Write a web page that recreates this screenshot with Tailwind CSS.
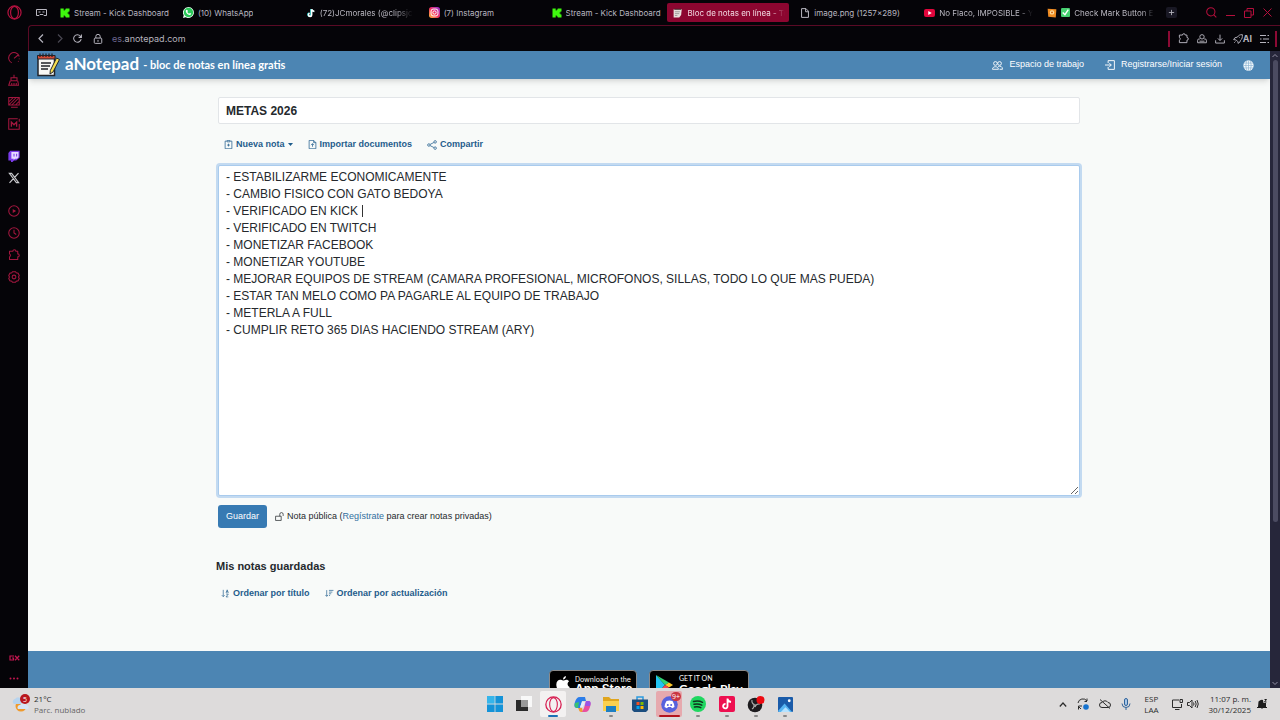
<!DOCTYPE html>
<html lang="es">
<head>
    <meta charset="UTF-8">
    <meta name="viewport" content="width=device-width, initial-scale=1.0">
    <title>Bloc de notas en línea</title>
    <script src="https://cdn.jsdelivr.net/npm/@tailwindcss/browser@4"></script>
</head>
<body class="h-screen flex flex-col overflow-hidden bg-[#050408] font-['Liberation_Sans',Arial,sans-serif]">

    <!-- Shared icons -->
    <svg class="hidden">
        <symbol id="kick" viewBox="0 0 10 10"><path fill="#3ff80e" d="M.5.5h3.200v2h1v-1h1v-1h3.800v3h-1v1h-1v1h1v1h1v3H5.700v-1h-1v-1h-1v2H.5z"/></symbol>
        <symbol id="puzzle" viewBox="0 0 16 16"><path fill="none" stroke="currentColor" stroke-width="1.400" stroke-linejoin="round" d="M2 3h4.500a2 2 0 0 1 4 0H13v3.500a2 2 0 0 1 0 4V14H2v-3.500a2.200 2.200 0 0 0 0-4z"/></symbol>
    </svg>

    <div class="flex flex-1 min-h-0">

        <!-- Browser sidebar -->
        <aside class="w-7 shrink-0 flex flex-col items-center text-[#a3173f]">
            <button aria-label="Menú" class="h-[25px] flex items-center text-[#b3123f]">
                <svg class="size-[15px]" viewBox="0 0 16 16" fill="none" stroke="currentColor" stroke-width="1.300"><circle cx="8" cy="8" r="7"/><ellipse cx="8" cy="8" rx="4.200" ry="6.500"/></svg>
            </button>
            <div class="flex flex-col gap-[10px] pt-[27px]">
                <button aria-label="GX Control"><svg class="size-3 block" viewBox="0 0 16 16" fill="none" stroke="currentColor" stroke-width="1.400"><path d="M5 14.500A7.200 7.200 0 1 1 15 6M8 8.500l5.500-4.500M15 8.500v1M14 12l-.5.8"/></svg></button>
                <button aria-label="Limpiador"><svg class="size-3 block" viewBox="0 0 16 16" fill="none" stroke="currentColor" stroke-width="1.400"><path d="M8 1v4M4 5h8v4H4zM3 9l-2 6h13l-1-6M5 15v-3M8 15v-3M11 15v-3"/></svg></button>
                <button aria-label="Fondos"><svg class="size-3 block" viewBox="0 0 16 16" fill="none" stroke="currentColor" stroke-width="1.400"><path d="M1 2h14v10H1zM4 15h9M1 8l6-6M1 12L11 2M5 12l9-9M10 12l5-5"/></svg></button>
                <button aria-label="Mods"><svg class="size-3 block" viewBox="0 0 16 16" fill="none" stroke="currentColor" stroke-width="1.400"><path d="M13 1H1v14h14V8M15 1v4"/><path stroke-width="1.800" d="M4.500 11.500v-6L8 9l3.500-3.500v6"/></svg></button>
            </div>
            <div class="flex flex-col gap-[10px] pt-5">
                <button aria-label="Twitch"><svg class="size-3 block" viewBox="0 0 16 16"><path fill="#7b3bea" d="M3 1h12.500v9L11 14H8l-2 2H4v-2H.5V4z"/><path fill="#e6dcff" d="M4.500 2.500H14v7l-2 2H9.500l-2 1.800v-1.800h-3z"/><path stroke="#7b3bea" stroke-width="1.400" d="M8 5v3.500M11.500 5v3.500"/></svg></button>
                <button aria-label="X"><svg class="size-3 block" viewBox="0 0 16 16" fill="none" stroke="#c8c8cc"><path stroke-width="1.500" d="M1.800 1.800h3l9.400 12.400h-3zM14 1.500L9 7M7 9l-5 5.500"/></svg></button>
            </div>
            <div class="flex flex-col gap-[10px] pt-[21px]">
                <button aria-label="Reproductor"><svg class="size-3 block" viewBox="0 0 16 16" fill="none" stroke="currentColor" stroke-width="1.400"><circle cx="8" cy="8" r="7"/><path fill="currentColor" d="M7 6.500l2.500 1.500L7 9.500z"/></svg></button>
                <button aria-label="Historial"><svg class="size-3 block" viewBox="0 0 16 16" fill="none" stroke="currentColor" stroke-width="1.400"><circle cx="8" cy="8" r="7"/><path d="M8 3.500V8l3 2"/></svg></button>
                <button aria-label="Extensiones"><svg class="size-3 block"><use href="#puzzle"/></svg></button>
                <button aria-label="Ajustes"><svg class="size-3 block" viewBox="0 0 16 16" fill="none" stroke="currentColor" stroke-width="1.400"><path d="M6 1h4l1 1.500 2.500.5L15 6l-1 2 1 2-1.500 3-2.500.5L10 15H6l-1-1.500L2.500 13 1 10l1-2-1-2 1.500-3L5 2.500z"/><circle cx="8" cy="8" r="2.500"/></svg></button>
            </div>
            <div class="mt-auto flex flex-col items-center gap-4 pb-2">
                <button aria-label="GX"><svg class="w-[11px] h-[6px] block" viewBox="0 0 22 12" fill="none" stroke="#c41650" stroke-width="2.400"><path d="M10 2H2v8h7V6H6M12 1.500l8.500 9M20.500 1.500l-8.500 9"/></svg></button>
                <button aria-label="Más"><svg class="w-[10px] h-[3px] block" viewBox="0 0 10 3" fill="#c41650"><circle cx="1.500" cy="1.500" r="1"/><circle cx="5" cy="1.500" r="1"/><circle cx="8.500" cy="1.500" r="1"/></svg></button>
            </div>
        </aside>

        <div class="flex flex-1 flex-col min-w-0">

            <!-- Tabs -->
            <div class="h-[25px] shrink-0 flex items-center text-[8px] text-[#b9b7c0] whitespace-nowrap font-[Inter,sans-serif]">
                <button aria-label="GX Corner" class="w-[25px] shrink-0 pl-2"><svg class="w-[11px] h-2 block" viewBox="0 0 22 16" fill="none" stroke="currentColor" stroke-width="2"><path d="M1 1h20v12h-5l-2-2H8l-2 2H1zM5 6h4M13 6h4"/></svg></button>
                <a href="#" class="flex flex-1 min-w-0 items-center gap-1 pl-[7px] pr-1"><svg class="size-[10px] shrink-0"><use href="#kick"/></svg><span class="overflow-hidden">Stream - Kick Dashboard</span></a>
                <a href="#" class="flex flex-1 min-w-0 items-center gap-1 pl-[7px] pr-1"><svg class="size-[11px] shrink-0" viewBox="0 0 16 16"><path fill="#e9fff0" d="M8 0a8 8 0 1 1-4 15L0 16l1-4A8 8 0 0 1 8 0z"/><circle cx="8" cy="8" r="6.800" fill="#28c958"/><path fill="#fff" d="M5 4l1.500.3.600 1.900-.8 1a5 5 0 0 0 2.600 2.500l1-1 2 .9c0 1.600-1.200 2.300-2.500 2C6.500 11 4 8 4 6c0-1 .4-1.700 1-2z"/></svg><span class="overflow-hidden">(10) WhatsApp</span></a>
                <a href="#" class="flex flex-1 min-w-0 items-center gap-1 pl-[7px] pr-1"><svg class="size-[10px] shrink-0" viewBox="0 0 16 16" fill="none" stroke-width="2.600"><path stroke="#27d9d4" d="M8 1.500v9A2.500 2.500 0 1 1 5 8M8 2q1 3 4.500 3.500"/><path stroke="#fff" d="M9 2v9a2.500 2.500 0 1 1-3-2.500M9 2q1 3 4.500 3.500"/></svg><span class="overflow-hidden [mask-image:linear-gradient(to_right,black_80%,transparent)]">(72)JCmorales (@clipsjc</span></a>
                <a href="#" class="flex flex-1 min-w-0 items-center gap-1 pl-[7px] pr-1"><svg class="size-[11px] shrink-0" viewBox="0 0 16 16"><defs><linearGradient id="ig" x1="0" y1="1" x2="1" y2="0"><stop stop-color="#ffc23d"/><stop offset=".5" stop-color="#f02c62"/><stop offset="1" stop-color="#8a35dd"/></linearGradient></defs><rect width="16" height="16" rx="4" fill="url(#ig)"/><g fill="none" stroke="#fff" stroke-width="1.400"><rect x="3" y="3" width="10" height="10" rx="3"/><circle cx="8" cy="8" r="2.400"/></g></svg><span class="overflow-hidden">(7) Instagram</span></a>
                <a href="#" class="flex flex-1 min-w-0 items-center gap-1 pl-[7px] pr-1"><svg class="size-[10px] shrink-0"><use href="#kick"/></svg><span class="overflow-hidden">Stream - Kick Dashboard</span></a>
                <a href="#" class="flex flex-1 min-w-0 h-[19px] items-center gap-1 pl-[6px] pr-1 rounded-xs bg-[#8c0630] text-[#f3dce4]"><svg class="size-[10px] shrink-0" viewBox="0 0 16 16"><path fill="#e7e0dc" d="M1 2h13l-1 9-3 4H1z"/><path stroke="#777" d="M3 6h8M3 9h7M3 12h4"/><path stroke="#3b2a2a" stroke-width="1.500" d="M2 2h11"/></svg><span class="overflow-hidden [mask-image:linear-gradient(to_right,black_85%,transparent)]">Bloc de notas en línea - To</span></a>
                <a href="#" class="flex flex-1 min-w-0 items-center gap-1 pl-[11px] pr-1"><svg class="size-[10px] shrink-0" viewBox="0 0 16 16" fill="none" stroke="currentColor" stroke-width="1.600"><path d="M2.500 1h7l4 4v10h-11zM9 1v5h4.500"/></svg><span class="overflow-hidden">image.png (1257×289)</span></a>
                <a href="#" class="flex flex-1 min-w-0 items-center gap-1 pl-[8px] pr-1"><svg class="w-[11px] h-2 shrink-0" viewBox="0 0 22 16"><rect width="22" height="16" rx="4" fill="#e2063c"/><path fill="#fff" d="M8.500 4l7 4-7 4z"/></svg><span class="overflow-hidden [mask-image:linear-gradient(to_right,black_85%,transparent)]">No Flaco, IMPOSIBLE - Y</span></a>
                <a href="#" class="flex flex-1 min-w-0 items-center gap-1 pl-[7px] pr-1"><svg class="size-[10px] shrink-0" viewBox="0 0 16 16"><path fill="#ef8c23" d="M1 1l14 1-1 13-12-1z"/><circle cx="8" cy="7" r="3.500" fill="#ffe0a0"/><circle cx="8" cy="7" r="1.500" fill="#cf5d0e"/></svg><svg class="size-[9px] shrink-0" viewBox="0 0 16 16"><rect width="16" height="16" rx="2" fill="#46cf70"/><path fill="none" stroke="#fff" stroke-width="2.500" d="M3 8l4 4 6-9"/></svg><span class="overflow-hidden [mask-image:linear-gradient(to_right,black_85%,transparent)]">Check Mark Button E</span></a>
                <div class="w-[117px] shrink-0 flex items-center justify-between pl-[3px] pr-2 text-[#b50f3c]">
                    <button aria-label="Nueva pestaña" class="p-[2px] mr-5 rounded-xs bg-[#191824] text-[#b5b3bd]"><svg class="size-[7px] block" viewBox="0 0 8 8" stroke="currentColor"><path d="M4 1v6M1 4h6"/></svg></button>
                    <button aria-label="Buscar"><svg class="size-[11px] block" viewBox="0 0 16 16" fill="none" stroke="currentColor" stroke-width="1.500"><circle cx="7" cy="7" r="6"/><path d="M11 11l4 4"/></svg></button>
                    <button aria-label="Minimizar"><svg class="size-[9px] block" viewBox="0 0 9 9" stroke="currentColor"><path d="M0 7.500h9"/></svg></button>
                    <button aria-label="Restaurar"><svg class="size-[10px] block" viewBox="0 0 10 10" fill="none" stroke="currentColor"><path d="M.5 3h6.500v6.500H.5zM3 3V.5h6.500V7H7"/></svg></button>
                    <button aria-label="Cerrar"><svg class="size-[9px] block" viewBox="0 0 9 9" stroke="currentColor"><path d="M.5.5l8 8M8.500.5l-8 8"/></svg></button>
                </div>
            </div>

            <!-- Address bar -->
            <div class="h-[26px] shrink-0 flex items-center gap-[9px] pl-2 pr-[3px] border-t border-l border-[#5a0a25] rounded-tl-sm text-[#b5b3bd] font-[Inter,sans-serif]">
                <button aria-label="Atrás"><svg class="size-[9px] block" viewBox="0 0 9 9" fill="none" stroke="currentColor" stroke-width="1.200"><path d="M6 .5l-4 4 4 4"/></svg></button>
                <button aria-label="Adelante" class="text-[#4a4852]"><svg class="size-[9px] block" viewBox="0 0 9 9" fill="none" stroke="currentColor" stroke-width="1.200"><path d="M3 .5l4 4-4 4"/></svg></button>
                <button aria-label="Recargar"><svg class="size-[9px] block" viewBox="0 0 16 16" fill="none" stroke="currentColor" stroke-width="1.800"><path d="M14.500 9A6.700 6.700 0 1 1 13 3.500L14.500 6M15 1v5h-5"/></svg></button>
                <button aria-label="Sitio seguro" class="ml-[2px]"><svg class="size-[10px] block" viewBox="0 0 16 16" fill="none" stroke="currentColor" stroke-width="1.600"><rect x="2" y="6.500" width="12" height="8.500" rx="1.500"/><path d="M4.500 6.500V4a3.500 3.500 0 0 1 7 0v2.500M8 9.500v3"/></svg></button>
                <span class="flex-1 text-[9px]"><span class="text-[#6d6790]">es.</span>anotepad.com</span>
                <div class="flex items-center gap-2">
                    <span class="w-[2px] h-4 bg-[#8c0a34]"></span>
                    <button aria-label="Extensiones"><svg class="size-[11px] block"><use href="#puzzle"/></svg></button>
                    <button aria-label="Perfil"><svg class="size-[10px] block" viewBox="0 0 16 16" fill="none" stroke="currentColor" stroke-width="1.500"><circle cx="8" cy="4.500" r="3.500"/><path d="M4.500 8H3a2 2 0 0 0-2 2v4h14v-4a2 2 0 0 0-2-2h-1.500M4 11.500h8"/></svg></button>
                    <button aria-label="Descargas"><svg class="size-[10px] block" viewBox="0 0 16 16" fill="none" stroke="currentColor" stroke-width="1.500"><path d="M8 1v9M4.500 7L8 10.500 11.500 7M1 10v4.500h14V10"/></svg></button>
                    <button class="flex items-center text-[9px] font-bold"><svg class="size-[10px]" viewBox="0 0 16 16" fill="none" stroke="currentColor" stroke-width="1.500"><path d="M15 1c-4 0-6 1-8 4L3 6 1 9l4 .5 3 3L8 15l3-2 1-3c3-2 3-5 3-9zM11 5l-1 1M4 12l-2 2"/></svg>AI</button>
                    <button aria-label="Configuración rápida"><svg class="w-[9px] h-2 block" viewBox="0 0 9 8" stroke="currentColor"><path d="M0 .5h6M7.500.5h1.500M0 4h1.500M3 4h6M0 7.500h6M7.500 7.500h1.500"/></svg></button>
                    <span class="w-[2px] h-4 -ml-[2px] bg-[#8c0a34]"></span>
                </div>
            </div>

            <!-- Page -->
            <div class="flex flex-1 min-h-0">
                <div class="flex flex-1 flex-col min-w-0 overflow-hidden bg-[#f8faf9]">

                    <header class="h-7 shrink-0 flex items-center bg-[#4c85b3] text-white pl-2 pr-4 shadow-md">
                        <a href="#" class="flex items-center flex-1 font-bold font-[Lato,sans-serif] text-[17px] leading-6">
                            <svg class="w-6 h-6 mr-[5px]" viewBox="0 0 24 24">
                                <path fill="#f7f7f5" stroke="#22242a" stroke-width="1.500" d="M2 3h16.500v19.500H2z"/>
                                <path fill="#d44c36" stroke="#22242a" d="M1.500 2.500h17.500v3.500h-17.500z"/>
                                <path stroke="#22242a" stroke-width="1.300" d="M4 .5v3.500M7 .5v3.500M10 .5v3.500M13 .5v3.500M16 .5v3.500M5 10h10M5 13h9M5 16h7"/>
                                <path fill="#f3dd52" stroke="#22242a" d="M20.500 5l3 1.500L17 19l-3 2 .3-3.500z"/>
                            </svg>
                            <span class="pb-[2px]">aNotepad</span><span class="text-[11px] ml-1">- bloc de notas en línea gratis</span>
                        </a>
                        <nav class="flex items-center gap-[21px] text-[9px]">
                            <a href="#" class="flex items-center gap-[6px]"><svg class="size-[11px]" viewBox="0 0 16 16" fill="none" stroke="currentColor" stroke-width="1.300"><circle cx="5" cy="5" r="2.700"/><circle cx="11" cy="5" r="2.700"/><path d="M.7 13.500c0-5 8.600-5 8.600 0zM9 9.500c3-1.500 6.300 0 6.300 4H11"/></svg>Espacio de trabajo</a>
                            <a href="#" class="flex items-center gap-[6px]"><svg class="size-[10px]" viewBox="0 0 16 16" fill="none" stroke="currentColor" stroke-width="1.500"><path d="M5 5V1h10v14H5v-4M0 8h10M7 5l3 3-3 3"/></svg>Registrarse/Iniciar sesión</a>
                            <button aria-label="Idioma"><svg class="size-[11px] block" viewBox="0 0 16 16"><circle cx="8" cy="8" r="7.500" fill="#f5fafd"/><path fill="none" stroke="#8fb4d2" d="M8 .5v15M.5 8h15M1.500 4.500h13M1.500 11.500h13M5.500 1q-3 7 0 14M10.500 1q3 7 0 14"/></svg></button>
                        </nav>
                    </header>

                    <main class="w-full max-w-[868px] mx-auto px-[3px] pt-[18px] flex-1 text-[9px] text-[#25292d]">
                        <input type="text" aria-label="Título de la nota" value="METAS 2026" class="block w-full h-[27px] px-[7px] bg-white border border-[#e2e5e8] rounded-xs text-[12px] font-bold">

                        <div class="flex items-center gap-[15px] h-[41px] pl-[6px] font-bold text-[#1f5c8c]">
                            <button class="flex items-center gap-[3px]"><svg class="size-[9px]" viewBox="0 0 16 16" fill="none" stroke="currentColor" stroke-width="1.300"><path d="M5 2H2v13.500h12V2h-3M5.500.7h5v2.600h-5zM8 6.500v5M5.500 9h5"/></svg>Nueva nota<svg class="w-[5px] h-[3px]" viewBox="0 0 5 3" fill="currentColor"><path d="M0 0h5L2.500 3z"/></svg></button>
                            <button class="flex items-center gap-[3px]"><svg class="size-[9px]" viewBox="0 0 16 16" fill="none" stroke="currentColor" stroke-width="1.300"><path d="M2 .7h8l4 4v10.800H2zM10 .7v4h4M8 12V6.500M5.500 9L8 6.500 10.500 9"/></svg>Importar documentos</button>
                            <button class="flex items-center gap-[3px]"><svg class="size-[10px]" viewBox="0 0 16 16" fill="none" stroke="currentColor" stroke-width="1.200"><circle cx="3" cy="8" r="2"/><circle cx="13" cy="3" r="2"/><circle cx="13" cy="13" r="2"/><path d="M5 7l6-3M5 9l6 3"/></svg>Compartir</button>
                        </div>

                        <div class="relative">
                            <textarea aria-label="Nota" spellcheck="false" class="block w-full h-[331px] px-[7px] py-[3px] resize-y outline-none bg-white border border-[#a9cbed] ring-2 ring-[#c3daf1] rounded-xs text-[12px] leading-[17px]">- ESTABILIZARME ECONOMICAMENTE
- CAMBIO FISICO CON GATO BEDOYA
- VERIFICADO EN KICK 
- VERIFICADO EN TWITCH
- MONETIZAR FACEBOOK
- MONETIZAR YOUTUBE
- MEJORAR EQUIPOS DE STREAM (CAMARA PROFESIONAL, MICROFONOS, SILLAS, TODO LO QUE MAS PUEDA)
- ESTAR TAN MELO COMO PA PAGARLE AL EQUIPO DE TRABAJO
- METERLA A FULL
- CUMPLIR RETO 365 DIAS HACIENDO STREAM (ARY)</textarea>
                            <span class="absolute left-36 top-10 w-px h-3 bg-[#333]"></span>
                        </div>

                        <div class="flex items-center gap-2 pt-[9px]">
                            <button class="h-[23px] px-2 rounded-[3px] bg-[#377ab3] text-white">Guardar</button>
                            <p class="flex items-center gap-[3px]"><svg class="size-[9px]" viewBox="0 0 16 16" fill="none" stroke="currentColor" stroke-width="1.300"><path d="M1 7.500h10V15H1zM8.500 7.500V4a3 3 0 0 1 6 0v3"/></svg><span>Nota pública (<a href="#" class="text-[#326fa0]">Regístrate</a> para crear notas privadas)</span></p>
                        </div>

                        <h2 class="-ml-[2px] pt-[30px] text-[11px] leading-4 font-bold">Mis notas guardadas</h2>
                        <div class="flex items-center gap-[15px] pt-[13px] pl-[3px] font-bold text-[#1f5c8c]">
                            <button class="flex items-center gap-[3px]"><svg class="size-[9px]" viewBox="0 0 16 16" fill="none" stroke="currentColor" stroke-width="1.200"><path d="M4 1.500v12M1.500 11L4 13.500 6.500 11M9 7l2-5.500L13 7M9.500 5h3M9 9h4l-4 5h4"/></svg>Ordenar por título</button>
                            <button class="flex items-center gap-[3px]"><svg class="size-[9px]" viewBox="0 0 16 16" fill="none" stroke="currentColor" stroke-width="1.200"><path d="M3 2v11M.5 10.500L3 13l2.500-2.500M7 2.500h8M7 5.500h6M7 8.500h4M7 11.500h2"/></svg>Ordenar por actualización</button>
                        </div>
                    </main>

                    <footer class="h-[37px] shrink-0 overflow-hidden flex items-start justify-center gap-3 pt-[19px] bg-[#4c85b3] text-white font-[Lato,sans-serif]">
                        <a href="#" class="h-[30px] w-[88px] flex shrink-0 gap-[5px] px-[6px] pt-[5px] rounded-sm bg-black border border-[#8a8a8a]">
                            <svg class="w-[14px] h-4 shrink-0" viewBox="0 0 14 16" fill="#fff"><path d="M10 0c0 2-1.500 3.500-3 3.500C7 1.500 8.500.3 10 0zM7 4.500c1 0 2-.8 3.300-.8 1.200 0 2.200.6 2.900 1.600-2.400 1.500-2 4.700.5 5.700C13 13.500 11.500 16 10 16c-1 0-1.500-.6-2.700-.6S5.500 16 4.600 16C2.500 16 .3 12 .3 8.800.3 5.500 2.300 3.800 4.200 3.800c1.200 0 2 .7 2.800.7z"/></svg>
                            <span class="whitespace-nowrap font-[Inter,sans-serif]"><span class="block text-[7px] leading-[7px]">Download on the</span><span class="block text-[12px] leading-[11px] font-semibold">App Store</span></span>
                        </a>
                        <a href="#" class="h-[30px] w-[100px] flex shrink-0 gap-[6px] px-[6px] pt-[4px] rounded-sm bg-black border border-[#8a8a8a]">
                            <svg class="w-[17px] h-5 shrink-0" viewBox="0 0 17 20"><path fill="#22c4f2" d="M0 0v20l9-10z"/><path fill="#30d475" d="M0 0l13 7.500L9 10z"/><path fill="#ffc928" d="M13 7.500l4 2.500-4 2.500L9 10z"/><path fill="#f04550" d="M0 20l13-7.500L9 10z"/></svg>
                            <span class="whitespace-nowrap"><span class="block text-[7px] leading-[7px]">GET IT ON</span><span class="block text-[12px] leading-[13px] font-bold">Google Play</span></span>
                        </a>
                    </footer>
                </div>

                <!-- Scrollbar -->
                <div class="w-[10px] shrink-0 flex flex-col items-center bg-[#26263a] text-[#8e8ca0]">
                    <svg class="w-[6px] h-[9px]" viewBox="0 0 6 9" fill="none" stroke="currentColor"><path d="M.5 6L3 3.500 5.500 6"/></svg>
                    <div class="w-[5px] grow-[462] rounded-full bg-[#4b4b61]"></div>
                    <div class="grow-[157]"></div>
                    <svg class="w-[6px] h-[9px]" viewBox="0 0 6 9" fill="none" stroke="currentColor"><path d="M.5 3L3 5.500 5.500 3"/></svg>
                </div>
            </div>
        </div>
    </div>

    <!-- Taskbar -->
    <div class="h-8 shrink-0 grid grid-cols-[1fr_auto_1fr] items-center bg-[#dddbdb] text-[#2c2c2c] text-[8px] leading-[11px] font-['Open_Sans',sans-serif]">
        <button class="flex items-center gap-1 pl-3 text-left">
            <svg class="w-[18px] h-5" viewBox="0 0 18 20"><circle cx="9" cy="12" r="5.500" fill="#ef9a2c"/><path fill="#b7d4ef" d="M1 9a3 3 0 0 1 2-4 4 4 0 0 1 7 1v4H2z"/><path fill="#d5e5f6" d="M6 15a2.500 2.500 0 0 1 2-4 4 4 0 0 1 7 0 2.500 2.500 0 0 1 1 4z"/><circle cx="13" cy="5" r="5" fill="#b8161d"/><text x="13" y="7.500" text-anchor="middle" font-size="7" fill="#fff">5</text></svg>
            <span>21°C<br><span class="text-[#666]">Parc. nublado</span></span>
        </button>

        <div class="flex items-center gap-[3px]">
            <button aria-label="Inicio" class="size-[26px] grid place-items-center"><svg class="size-4" viewBox="0 0 16 16" fill="#1493d8"><path fill="#36b5ea" d="M0 0h7.600v7.600H0z"/><path d="M8.400 0H16v7.600H8.400zM0 8.400h7.600V16H0zM8.400 8.400H16V16H8.400z"/></svg></button>
            <button aria-label="Vista de tareas" class="size-[26px] grid place-items-center"><svg class="size-4" viewBox="0 0 16 16"><path fill="#f8f8f8" d="M5 0h11v11H5z"/><path fill="#2a2a2a" d="M0 4h5v7h7v4H0z"/><path fill="#999" d="M5 4h7v7H5z"/></svg></button>
            <button aria-label="Opera GX" class="relative size-[26px] grid place-items-center bg-[#f3f1f1] rounded-xs"><svg class="size-[17px]" viewBox="0 0 16 16" fill="none" stroke="#d71c50"><circle cx="8" cy="8" r="7.200" stroke-width="1.200"/><ellipse cx="8" cy="8" rx="3.600" ry="6.500"/></svg><span class="absolute bottom-0 w-[10px] h-[2px] rounded-full bg-[#1b6fb5]"></span></button>
            <button aria-label="Copilot" class="size-[26px] grid place-items-center"><svg class="size-[17px]" viewBox="0 0 17 17"><path fill="#2b7de9" d="M6 1h5l1 4H8L6 12H3c-3 0-3-3-2-6s2-5 5-5z"/><path fill="#39c26f" d="M1 7l4-1-1 6c-3 0-4-2-3-5z"/><path fill="#f39a34" d="M4 12h4l1 4H7c-2 0-2-3-3-4z"/><path fill="#e84fa1" d="M11 16H8l2-4 2-7h2c3 0 3 3 2 6s-2 5-5 5z"/><path fill="#9a55e6" d="M12 5h2c3 0 3 2 2 5h-5z"/><path fill="#e5eefc" d="M8 6h3l-2 5H6z"/></svg></button>
            <button aria-label="Explorador" class="relative size-[26px] grid place-items-center"><svg class="w-4 h-[15px]" viewBox="0 0 16 15"><path fill="#e0a51e" d="M0 0h6l2 2h8v11H0z"/><path fill="#fbd04e" d="M0 4h16v10H0z"/><path fill="#1e7fc2" d="M3 9h10v6H3z"/></svg><span class="absolute bottom-0 w-1 h-[2px] rounded-full bg-[#888]"></span></button>
            <button aria-label="Store" class="size-[26px] grid place-items-center"><svg class="size-4" viewBox="0 0 16 16"><path fill="none" stroke="#2b9be0" stroke-width="1.500" d="M5 4V1h6v3"/><path fill="#1c4d7e" d="M0 3.500h16V14l-2 2H2l-2-2z"/><path fill="#f25022" d="M4.500 6h3v3h-3z"/><path fill="#7fba00" d="M8.500 6h3v3h-3z"/><path fill="#00a4ef" d="M4.500 10h3v3h-3z"/><path fill="#ffb900" d="M8.500 10h3v3h-3z"/></svg></button>
            <button aria-label="Discord" class="relative size-[26px] grid place-items-center bg-[#e6a9ae] rounded-xs"><svg class="size-[17px]" viewBox="0 0 17 17"><circle cx="8.500" cy="8.500" r="8.300" fill="#5662dd"/><path fill="#fff" d="M5.500 5q3-1 6 0 2 3 2 6l-2.500 1.200-1-1.200h-3l-1 1.200L3.500 11q0-3 2-6z"/><circle cx="6.800" cy="9" r="1" fill="#5662dd"/><circle cx="10.200" cy="9" r="1" fill="#5662dd"/></svg><span class="absolute top-px right-px px-px rounded-full bg-[#c93540] text-white text-[7px] leading-[9px]">9+</span><span class="absolute bottom-0 w-[21px] h-[2px] rounded-full bg-[#b3131d]"></span></button>
            <button aria-label="Spotify" class="relative size-[26px] grid place-items-center"><svg class="size-4" viewBox="0 0 16 16"><circle cx="8" cy="8" r="8" fill="#1fd760"/><path fill="none" stroke="#10351d" stroke-width="1.500" stroke-linecap="round" d="M3.500 5.500q5-1.300 9 .8M4 8.300q4.300-1 7.800.8M4.500 11q3.500-.8 6.300.6"/></svg><span class="absolute bottom-0 w-1 h-[2px] rounded-full bg-[#888]"></span></button>
            <button aria-label="TikTok" class="relative size-[26px] grid place-items-center"><svg class="size-4" viewBox="0 0 16 16"><rect width="16" height="16" rx="2" fill="#ee0f50"/><path fill="none" stroke="#fff" stroke-width="1.800" d="M8.500 2.500v7.700a2.200 2.200 0 1 1-2-2.200M8.500 3q.5 2.500 3.500 3"/></svg><span class="absolute bottom-0 w-1 h-[2px] rounded-full bg-[#888]"></span></button>
            <button aria-label="OBS" class="relative size-[26px] grid place-items-center"><svg class="w-[18px] h-[17px]" viewBox="0 0 18 17"><circle cx="8" cy="9" r="7.300" fill="#1d1b1e"/><g fill="none" stroke="#aaa" stroke-width="1.200"><path d="M5 4a4 4 0 0 0 4 5M13 8a4 4 0 0 0-5 3M5 13a4 4 0 0 0 1.500-5.500"/></g><circle cx="13.500" cy="4" r="4" fill="#ee0b12"/></svg><span class="absolute bottom-0 w-1 h-[2px] rounded-full bg-[#888]"></span></button>
            <button aria-label="Fotos" class="relative size-[26px] grid place-items-center"><svg class="size-[15px]" viewBox="0 0 16 16"><rect width="16" height="16" rx="1" fill="#1a5ba9"/><path fill="#57b5f2" d="M0 15l7-8 8 9H1z"/><path fill="#b5e2ff" d="M3 16l5-5 5 5z"/><circle cx="12" cy="4" r="1.500" fill="#fff"/></svg><span class="absolute bottom-0 w-1 h-[2px] rounded-full bg-[#888]"></span></button>
        </div>

        <div class="flex items-center justify-end gap-[10px] pr-[13px]">
            <button aria-label="Iconos ocultos"><svg class="w-2 h-[5px] block" viewBox="0 0 8 5" fill="none" stroke="currentColor" stroke-width="1.200"><path d="M.8 4.500L4 1l3.200 3.500"/></svg></button>
            <button aria-label="Actualización"><svg class="size-3 block" viewBox="0 0 12 12" fill="none" stroke="currentColor"><path d="M1 5a5 5 0 0 1 9-2V.5M10 3.500H7.500M1.500 11.500V8H5M1.500 8.500L4 11"/><circle cx="9" cy="9" r="2.800" fill="#1673cf" stroke="none"/></svg></button>
            <button aria-label="OneDrive"><svg class="w-3 h-[10px] block" viewBox="0 0 12 10" fill="none" stroke="currentColor"><path d="M3 8.500a2.300 2.300 0 0 1 0-5 3.500 3.500 0 0 1 6 0 2.500 2.500 0 0 1 0 5zM1 .5l10 9"/></svg></button>
            <button aria-label="Micrófono"><svg class="w-[10px] h-3 block" viewBox="0 0 10 12" fill="none" stroke="#31649b"><rect x="3.500" y=".5" width="3" height="7" rx="1.500" fill="#a7c7e8"/><path d="M1 5.500a4 4 0 0 0 8 0M5 9.500V12"/></svg></button>
            <button class="px-[3px] text-center">ESP<br>LAA</button>
            <button aria-label="Red y sonido" class="flex items-center gap-1"><svg class="size-[11px]" viewBox="0 0 11 11" fill="none" stroke="currentColor"><path d="M7 1H.5v7.500h9V5M3 10.500h4.500M8 .5h2.500v3H8z"/></svg><svg class="w-3 h-[10px]" viewBox="0 0 12 10" fill="none" stroke="currentColor"><path d="M.5 3.500h2L5 1v8L2.500 6.500h-2zM6.500 3.500q1 1.500 0 3M8.200 2q2 3 0 6M10 1q2.500 4 0 8"/></svg></button>
            <button class="text-right">11:07 p.&nbsp;m.<br>30/12/2025</button>
            <button aria-label="Notificaciones" class="-ml-1"><svg class="size-[10px] block" viewBox="0 0 10 10"><path fill="#1c1c1c" d="M1.500 2.500Q4 0 6 1l.500 3H9v4h1v1H6q-1 1.500-2 0H0V8h1z"/><path fill="none" stroke="#1c1c1c" d="M7.500.5H9.500L7.500 3h2"/></svg></button>
        </div>
    </div>

</body>
</html>
